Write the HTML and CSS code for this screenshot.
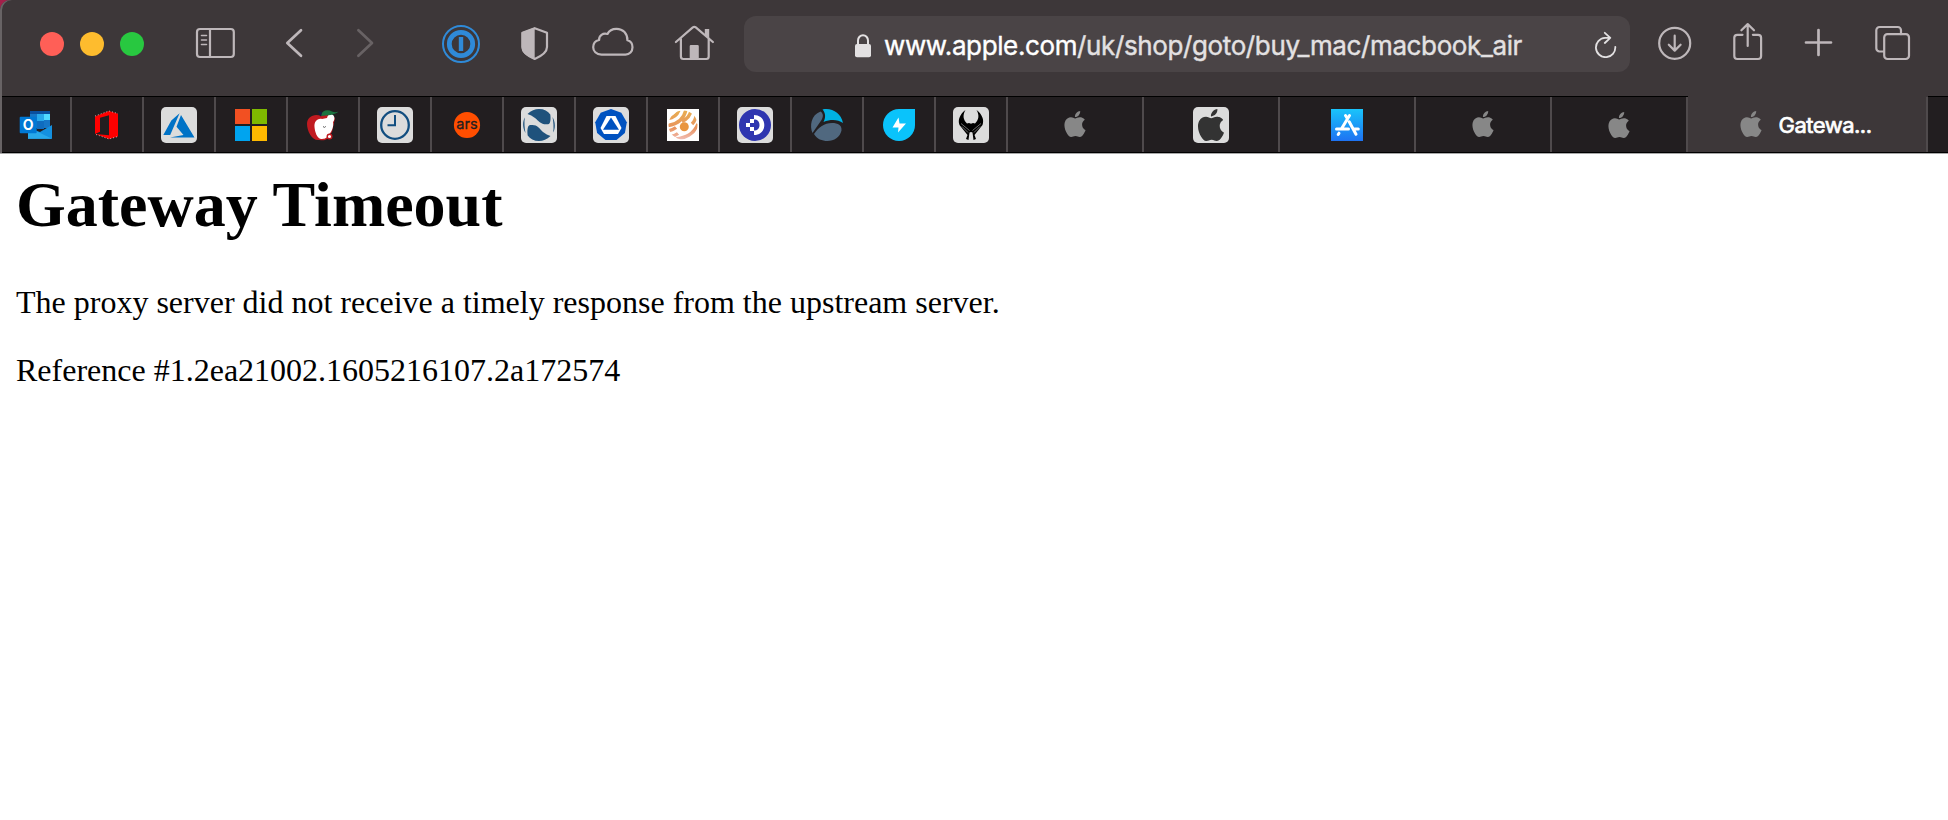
FILE: index.html
```
<!DOCTYPE html>
<html lang="en">
<head>
    <meta charset="UTF-8">
    <title>Gateway Timeout</title>
    <link rel="stylesheet" href="styles.css">
</head>
<body>

    <svg class="defs" width="0" height="0">
        <symbol id="apple" viewBox="0 0 24 24">
            <path d="M12.152 6.896c-.948 0-2.415-1.078-3.96-1.04-2.04.027-3.91 1.183-4.961 3.014-2.117 3.675-.546 9.103 1.519 12.09 1.013 1.454 2.208 3.09 3.792 3.039 1.52-.065 2.09-.987 3.935-.987 1.831 0 2.35.987 3.96.948 1.637-.026 2.676-1.48 3.676-2.948 1.156-1.688 1.636-3.325 1.662-3.415-.039-.013-3.182-1.221-3.22-4.857-.026-3.04 2.48-4.494 2.597-4.559-1.429-2.09-3.623-2.324-4.39-2.376-2-.156-3.675 1.09-4.61 1.09zM15.53 3.83c.843-1.012 1.4-2.427 1.245-3.83-1.207.052-2.662.805-3.532 1.818-.78.896-1.454 2.338-1.273 3.714 1.338.104 2.715-.688 3.559-1.701"/>
        </symbol>
    </svg>

    <header class="browser">
        <div class="toolbar">
            <div class="lights">
                <span class="light red"></span>
                <span class="light yellow"></span>
                <span class="light green"></span>
            </div>

            <svg class="icon sidebar" viewBox="0 0 44 44"><rect x="3" y="7" width="36.8" height="28" rx="3"/><path d="M16 7v28"/><path class="thin" d="M7.5 13.5h5M7.5 18h5M7.5 22.5h5"/></svg>
            <svg class="icon back" viewBox="0 0 44 44"><path d="M29 8.2L15.3 21 29 33.8"/></svg>
            <svg class="icon forward" viewBox="0 0 44 44"><path d="M14.4 8.2L28 21 14.4 33.8"/></svg>
            <svg class="icon password" viewBox="0 0 44 44"><circle cx="22" cy="22" r="18" stroke-width="2"/><circle cx="22" cy="22" r="11.7" stroke-width="4.8"/><path d="M22 15v14" stroke-width="4.4" stroke-linecap="butt"/></svg>
            <svg class="icon shield" viewBox="0 0 44 44"><path d="M21.7 6.2L34 10.8V25c0 5.5-5 8.8-12.3 12-7.3-3.2-12.3-6.5-12.3-12V10.8z"/><path class="solid" d="M21.7 5.5v32C13 34 8.6 30.5 8.6 25V10.4z"/></svg>
            <svg class="icon cloud" viewBox="0 0 44 44"><path d="M10.5 32.6C5 32.6 2.2 29 2.2 25.3c0-3.6 2.2-6.5 5.9-7.3-.3-4.5 3.8-7.4 8.4-6 1.5-3.3 5-5.2 9-5.2 6.6 0 11.1 5 10.9 11.5 3 .8 5.1 3.5 5.1 7 0 4.2-3 7.3-7 7.3z"/></svg>
            <svg class="icon home" viewBox="0 0 44 44"><path d="M2.9 20L19.800 5.400q1.500-1.200 3 0L39.900 20M7.900 17v17.600q0 2.400 2.400 2.400h23q2.400 0 2.400-2.400V17"/><path class="solid" d="M31.800 7h4.400v9.500l-4.400-3.800zM16.700 37V24.200q0-1.200 1.200-1.200h6.700q1.200 0 1.200 1.200V37z"/></svg>

            <div class="address">
                <svg class="lock" viewBox="0 0 16 24"><rect x="0" y="10" width="16" height="13.300" rx="2"/><path d="M3 11V6.500a5 5.300 0 0 1 10 0V11"/></svg>
                <span class="url"><span class="domain">www.apple.com</span>/uk/shop/goto/buy_mac/macbook_air</span>
                <svg class="reload" viewBox="0 0 28 28"><path d="M23.300 16.800A9.700 9.700 0 1 1 13 7.800h5.300M12.800 2.800l5.500 5-5.500 5.200"/></svg>
            </div>

            <svg class="icon download" viewBox="0 0 44 44"><circle cx="21.700" cy="21.300" r="15.500"/><path d="M21.700 13.700v14.800M15.800 22.700l5.900 5.900 5.900-5.900"/></svg>
            <svg class="icon share" viewBox="0 0 44 44"><path d="M16.500 12.800H11.300a3 3 0 0 0-3 3V34a3 3 0 0 0 3 3h20.800a3 3 0 0 0 3-3V15.800a3 3 0 0 0-3-3h-5.200M21.700 24V2.500M15.400 8.300l6.300-6.200 6.300 6.200"/></svg>
            <svg class="icon plus" viewBox="0 0 44 44"><path d="M21.500 8v25M9 20.500h25"/></svg>
            <svg class="icon overview" viewBox="0 0 44 44"><rect x="13.200" y="12.200" width="24.800" height="24.800" rx="3.200"/><path d="M13 29.500H8.500a3.200 3.200 0 0 1-3.200-3.200V8.200A3.200 3.200 0 0 1 8.500 5h18.300A3.200 3.200 0 0 1 30 8.200v4"/></svg>
        </div>

        <div class="tabs">
            <!-- Outlook -->
            <div class="tab">
                <svg class="favicon" viewBox="0 0 36 36">
                    <path fill="#0a4f9e" d="M12 4h20v4H12z"/><path fill="#1676c6" d="M12 7h7v14h-7z"/><path fill="#28a8ea" d="M19 7h7v7h-7z"/><path fill="#50d9ff" d="M26 7h6v6h-6z"/><path fill="#0f6cbf" d="M19 14h7v8h-7z"/><path fill="#1676c6" d="M26 13h6v8h-6z"/>
                    <path fill="#1490df" d="M34 18v13.700H10V21l12 4z"/><path fill="#28a8ea" d="M10 20l24 11.700H10z"/>
                    <rect x="1.700" y="9.700" width="17" height="16.600" rx="1" fill="#0078d4"/>
                    <text x="10.200" y="23" font-size="14" font-weight="700" fill="#fff" text-anchor="middle">O</text>
                </svg>
            </div>
            <!-- Office -->
            <div class="tab">
                <svg class="favicon" viewBox="0 0 36 36"><path fill="#f00" d="M6 9.500L20 4l9 2.700v22.700L20 32 6.500 27l13.500 1.200V8.300l-9 2.500v14L6 27z"/><path d="M6 9L20 4l9 2.500M7 27.500L20 32l9-2.500" fill="none" stroke="#e9caca" stroke-width=".8" stroke-dasharray="1 2"/></svg>
            </div>
            <!-- Azure -->
            <div class="tab">
                <svg class="favicon chip" viewBox="0 0 36 36"><path fill="#0072c6" d="M18.600 6.300L10.300 13.500 2.300 28h6.900zM20 8l13.500 22.600H9L22.500 28l-7-8.300z"/></svg>
            </div>
            <!-- Microsoft -->
            <div class="tab">
                <svg class="favicon" viewBox="0 0 36 36"><path fill="#f25022" d="M2 2h15v15H2z"/><path fill="#7fba00" d="M19 2h15v15H19z"/><path fill="#00a4ef" d="M2 19h15v15H2z"/><path fill="#ffb900" d="M19 19h15v15H19z"/></svg>
            </div>
            <!-- MacRumors -->
            <div class="tab">
                <svg class="favicon" viewBox="0 0 36 36">
                    <path fill="#c01a20" d="M16 9C9 6 2 10 2 17s5 17 12 16c3 0 5 1 8-1l5-7 3-14c-4-3-9-4-14-2z"/>
                    <path fill="#fff" d="M17 12c-5-1-8 3-7.500 8S12 31.500 16 32c3 0 6-.5 7.500-4 3-3 5.500-8 4.500-13 2-2 2-6-.500-7.300-2.500-1.200-5 .3-5.500 3.300z"/>
                    <path fill="#1b7340" d="M16 8c1-5 7-6 11-3.500 2.500 1 5 .7 6.500 0-3 3.500-12 4-17.500 4.500z"/><path fill="#151c43" d="M13 4l4 1-1 5z"/>
                    <circle cx="24.500" cy="29.500" r="2.300" fill="#fff" stroke="#c01a20" stroke-width="1.400"/><path d="M18.300 19l1 2 1.500-2" fill="none" stroke="#888"/>
                </svg>
            </div>
            <!-- Clock -->
            <div class="tab">
                <svg class="favicon chip" viewBox="0 0 36 36"><circle cx="18" cy="18" r="13.800" fill="none" stroke="#124e80" stroke-width="2.300"/><path d="M18 8v10.300h-7.500" fill="none" stroke="#124e80" stroke-width="2"/></svg>
            </div>
            <!-- Ars Technica -->
            <div class="tab">
                <svg class="favicon" viewBox="0 0 36 36"><circle cx="18" cy="18" r="13.100" fill="#ff4e00"/><text class="ars" x="18" y="21.800" text-anchor="middle">ars</text></svg>
            </div>
            <div class="tab">
                <svg class="favicon chip" viewBox="0 0 36 36"><path fill="#1f527c" d="M6.500 7C10 3.500 14 2 18 2c5 0 9 2 11.300 5.500.5 4 .5 9.700-2.300 9.700-7 .800-9-3-13-6.200C11.500 9 9 7.800 6.500 7zM29.500 29C26 32.500 22 34 18 34c-5 0-9-2-11.300-5.500-.5-4-.5-9.700 2.300-10.400 7-1.100 9 2.700 13 6.900 2.500 2 5 3.200 7.500 4zM3.800 10.500c-2.300 4-2.300 10.500.7 15.500-1-5-1.400-10.500-.7-15.500zM32.200 25.500c2.300-4 2.300-10.500-.7-15.500 1 5 1.400 10.500.7 15.500z"/></svg>
            </div>
            <div class="tab">
                <svg class="favicon chip" viewBox="0 0 36 36"><path fill="#0052c0" d="M18 2l10.300 3.700 5.500 9.500-1.900 10.800-8.400 7H12.500L4.100 26 2.200 15.200 7.700 5.700z"/><path fill="#fff" d="M13.500 9h9L28.500 21l-3.500 6H11l-3.500-6z"/><path fill="#0052c0" d="M18 10.500L26 22.800H10z"/></svg>
            </div>
            <div class="tab">
                <svg class="favicon" viewBox="0 0 36 36">
                    <clipPath id="ball"><circle cx="18" cy="18" r="14.500"/></clipPath>
                    <linearGradient id="sunset" gradientUnits="userSpaceOnUse" x1="0" y1="34" x2="0" y2="2"><stop offset="0" stop-color="#f3c3c0"/><stop offset=".4" stop-color="#e8935f"/><stop offset="1" stop-color="#e8b04f"/></linearGradient>
                    <path fill="#fff" d="M2 2h32v32H2z"/>
                    <g clip-path="url(#ball)" fill="none" stroke="url(#sunset)" stroke-width="3.400">
                        <path d="M3 11.500q8-1 11-8.500M3 18.500q15-2 18-16M3 24q5-1 8-3.500M17 14.500q8-4 9-11M5 29.500q5-.5 8-3M27 17q4-4 4-9M11 32q8-1 13-4 6-3.500 9-11"/>
                    </g>
                    <circle cx="19.300" cy="19.800" r="4.500" fill="#e9953f"/>
                </svg>
            </div>
            <div class="tab">
                <svg class="favicon chip" viewBox="0 0 36 36"><circle cx="18" cy="18" r="16" fill="#2f36b0"/><path fill="#fff" d="M17 8c6 0 10.300 4 10.300 10S23 28 17 28v-4.500c3.500 0 5.500-2 5.500-5.500s-2-5.500-5.500-5.500zM13 12h4v4h-4zM9 16h4v4H9zM13 20h4v4h-4z"/></svg>
            </div>
            <div class="tab">
                <svg class="favicon" viewBox="0 0 36 36"><path fill="#50687f" d="M11.500 4.500c3 2 3 5 1 8.500L3.500 26C.5 19 2 8 11.500 4.500zM5 27c5-7 10-11 18-11 6 0 10 2 9.500 7.500C31 30 25 34 18.500 34 13 34 8 32 5 27z"/><path fill="#00b2e3" d="M13.500 2.500C23 .5 32 6 34 16c-5-3.500-12-4-19.500-1C17 10 16.500 6 13.500 2.500z"/></svg>
            </div>
            <div class="tab">
                <svg class="favicon" viewBox="0 0 36 36"><path fill="#0ac3fb" d="M18 2h16v16a16 16 0 1 1-16-16z"/><path fill="#fff" d="M17.500 10.500L11.500 20.500h6L17 25.500 25 16.500h-6.500z"/></svg>
            </div>
            <div class="tab">
                <svg class="favicon chip" viewBox="0 0 36 36">
                    <path fill="#000" d="M12.500 3C7 7 4.500 13 6.500 18l8 10-1.500 4 2.500 1 1-7.500L18 25l1.500.5 1 7.500 2.500-1-1.500-4 8-10C31.500 13 29 7 23.500 3c3 5 2.500 9.500-1.500 13.500l-2-.5-2 .8-2-.8-2 .5C10 12.500 9.500 8 12.500 3z"/>
                    <path d="M8 16.500l8.500 7M28 16.500l-8.500 7M9 19.500l6 6M27 19.500l-6 6" stroke="#dcdcdc" stroke-width=".5"/>
                </svg>
            </div>

            <div class="tab wide"><svg class="apple"><use href="#apple"/></svg></div>
            <div class="tab wide"><svg class="favicon chip" viewBox="0 0 36 36"><use href="#apple" x="2" y="2" width="32" height="32" fill="#333"/></svg></div>
            <div class="tab wide">
                <svg class="favicon" viewBox="0 0 36 36">
                    <linearGradient id="store" x1="0" y1="0" x2="0" y2="1"><stop offset="0" stop-color="#1ac4fb"/><stop offset="1" stop-color="#1e72f2"/></linearGradient>
                    <path fill="url(#store)" d="M2 2h32v32H2z"/><path d="M16.500 8.500l1.700 2.800M20.500 8.500L12.500 21.800M10 26.200l-.8 1.300M20.200 14.700L27 27.300M7.500 22h12M25.500 22h3.800" fill="none" stroke="#fff" stroke-width="3" stroke-linecap="round"/>
                </svg>
            </div>
            <div class="tab wide"><svg class="apple"><use href="#apple"/></svg></div>
            <div class="tab wide"><svg class="apple low"><use href="#apple"/></svg></div>
            <div class="tab active"><svg class="apple"><use href="#apple"/></svg><span class="title">Gatewa...</span></div>
            <div class="tab rest"></div>
        </div>
    </header>

    <main class="page">
        <h1>Gateway Timeout</h1>
        <p>The proxy server did not receive a timely response from the upstream server.</p>
        <p>Reference #1.2ea21002.1605216107.2a172574</p>
    </main>

</body>
</html>
```
FILE: styles.css
```
* {
    box-sizing: border-box;
}

body {
    margin: 0;
    height: 820px;
    overflow: hidden;
    background: linear-gradient(#a3204a 0, #a3204a 20px, #fff 20px);
    display: flex;
    flex-direction: column;
}

.defs {
    position: absolute;
}

/* Browser chrome */
.browser {
    height: 154px;
    background-color: #3d3739;
    border-bottom: 1px solid #a8a8a8;
    border-top-left-radius: 10px;
    box-shadow: inset 2px 0 #686365;
    font-family: Inter, "Liberation Sans", sans-serif;
}

.toolbar {
    height: 96px;
    padding: 0 33px 8px 40px;
    display: flex;
    align-items: center;
}

.lights {
    display: flex;
    gap: 16px;
    margin-right: 50px;
}

.light {
    width: 24px;
    height: 24px;
    border-radius: 50%;
}

.red { background-color: #ff5f57; }
.yellow { background-color: #febc2e; }
.green { background-color: #28c840; }

.icon {
    width: 44px;
    height: 44px;
    flex: none;
    fill: none;
    stroke: #beb7ba;
    stroke-width: 2.2;
    stroke-linecap: round;
    stroke-linejoin: round;
}

.icon .thin {
    stroke-width: 1.6;
}

.icon .solid {
    fill: #beb7ba;
    stroke: none;
}

.back {
    margin-left: 34px;
    stroke-width: 2.7;
}

.forward {
    margin-left: 28px;
    stroke: #686264;
    stroke-width: 2.7;
}

.password {
    margin-left: 51px;
    stroke: #2f8ad8;
}

.shield { margin-left: 30px; }
.cloud { margin-left: 34px; }
.home { margin-left: 38px; }
.download { margin-left: 23px; }
.share { margin-left: 29px; }
.overview { margin-left: 30px; }

.plus {
    margin-left: 27px;
    stroke-width: 2.7;
}

.address {
    flex: 1;
    height: 56px;
    margin-left: 27px;
    padding: 0 10px 0 111px;
    background-color: #4a4446;
    border-radius: 12px;
    display: flex;
    align-items: center;
}

.lock {
    width: 16px;
    height: 24px;
    margin: 3px 13px 0 0;
    fill: #e3e1e2;
}

.lock path {
    fill: none;
    stroke: #e3e1e2;
    stroke-width: 2;
}

.url {
    color: #e3e1e2;
    font-size: 26px;
    line-height: 32px;
    letter-spacing: -0.38px;
    -webkit-text-stroke: 0.4px;
    margin-top: 3px;
    white-space: nowrap;
}

.domain {
    color: #fff;
}

.reload {
    width: 28px;
    height: 28px;
    margin-left: auto;
    fill: none;
    stroke: #e3e1e2;
    stroke-width: 1.8;
    stroke-linecap: round;
    stroke-linejoin: round;
}

/* Tabs */
.tabs {
    height: 57px;
    padding-left: 2px;
    display: flex;
}

.tab {
    width: 72px;
    padding-top: 1px;
    background-color: #221e20;
    border-top: 1px solid #000;
    border-bottom: 1px solid #000;
    box-shadow: inset -2px 0 #4f4a4c;
    padding-right: 2px;
    display: flex;
    justify-content: center;
    align-items: center;
    flex: none;
}

.tab:first-child {
    width: 70px;
}

.tab.wide {
    width: 136px;
}

.tab.active {
    width: 240px;
    padding-right: 6px;
    background-color: #3d3739;
    border-top-color: #3d3739;
}

.tab.rest {
    flex: 1;
    box-shadow: none;
}

.favicon {
    width: 36px;
    height: 36px;
}

.chip {
    background-color: #dcdcdc;
    border-radius: 5px;
}

.ars {
    font-size: 14.5px;
    fill: #221e20;
    stroke: #221e20;
    stroke-width: 0.3px;
}

.apple {
    width: 26px;
    height: 26px;
    margin-bottom: 3px;
    fill: #878787;
}

.apple.low {
    margin-bottom: 0;
}

.title {
    margin-left: 14px;
    color: #fff;
    font-size: 22px;
    letter-spacing: -0.5px;
    -webkit-text-stroke: 0.7px;
}

/* Error page */
.page {
    flex: 1;
    padding: 13px 16px;
    background-color: #fff;
    color: #000;
    font-family: "Liberation Serif", serif;
    font-size: 32px;
    line-height: 36px;
}

h1 {
    margin: 0 0 41px;
    font-size: 64px;
    line-height: 76px;
}

p {
    margin: 0 0 32px;
}
```
